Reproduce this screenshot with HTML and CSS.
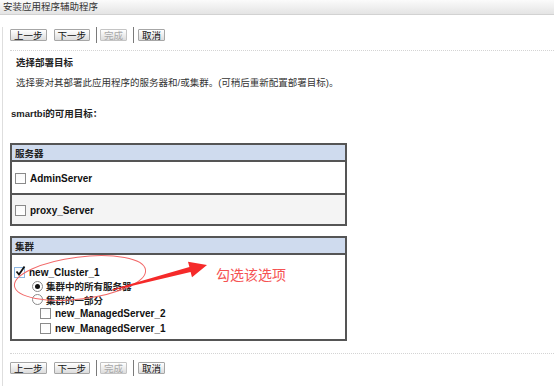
FILE: index.html
```html
<!DOCTYPE html>
<html lang="zh-CN">
<head>
    <meta charset="UTF-8">
    <title>安装应用程序辅助程序</title>
    <link rel="stylesheet" href="styles.css">
</head>
<body>
    <div class="titlebar">安装应用程序辅助程序</div>

    <div class="page">
        <div class="toolbar">
            <button class="btn">上一步</button>
            <button class="btn">下一步</button>
            <span class="sep"></span>
            <button class="btn" disabled>完成</button>
            <span class="sep"></span>
            <button class="btn btn-last">取消</button>
        </div>
        <div class="dots"></div>

        <div class="intro">
            <h3>选择部署目标</h3>
            <p>选择要对其部署此应用程序的服务器和/或集群。(可稍后重新配置部署目标)。</p>
        </div>

        <h4 class="targets">smartbi的可用目标：</h4>

        <div class="box">
            <div class="box-head">服务器</div>
            <div class="row">
                <span class="check"></span><span class="name">AdminServer</span>
            </div>
            <div class="row row-alt">
                <span class="check"></span><span class="name">proxy_Server</span>
            </div>
        </div>

        <div class="box cluster">
            <div class="box-head">集群</div>
            <div class="cluster-body">
                <div class="item">
                    <span class="check checked">
                        <svg width="13" height="13" viewBox="0 0 13 13"><path d="M2.5 6.5 L5 9.5 L10.5 1.5" fill="none" stroke="#111" stroke-width="1.8"/></svg>
                    </span><span class="name">new_Cluster_1</span>
                </div>
                <div class="item lvl1">
                    <span class="radio on"></span><span class="cn">集群中的所有服务器</span>
                </div>
                <div class="item lvl1 short">
                    <span class="radio"></span><span class="cn">集群的一部分</span>
                </div>
                <div class="item lvl2 tall">
                    <span class="check"></span><span class="name">new_ManagedServer_2</span>
                </div>
                <div class="item lvl2">
                    <span class="check"></span><span class="name">new_ManagedServer_1</span>
                </div>
            </div>
        </div>

        <div class="dots bottom"></div>
        <div class="toolbar">
            <button class="btn">上一步</button>
            <button class="btn">下一步</button>
            <span class="sep"></span>
            <button class="btn" disabled>完成</button>
            <span class="sep"></span>
            <button class="btn btn-last">取消</button>
        </div>
    </div>

    <!-- red hand-drawn note over the cluster box -->
    <svg class="mark" width="554" height="386" viewBox="0 0 554 386">
        <ellipse cx="80" cy="278" rx="66" ry="21" transform="rotate(-7 80 278)" fill="none" stroke="#f26a6a" stroke-width="1"/>
        <polygon points="112,289.5 189.4,267.1 188,261.8 207,265 192,277.2 190.6,271.9 112.3,290.5" fill="#f52a2a"/>
    </svg>
    <span class="note">勾选该选项</span>
</body>
</html>
```

FILE: styles.css
```css
* {
    box-sizing: border-box;
}
body {
    margin: 0;
    position: relative;
    width: 554px;
    height: 386px;
    overflow: hidden;
    background: #fff;
    color: #222;
    font-family: 'Liberation Sans', 'Noto Sans CJK SC', sans-serif;
    font-size: 9.5px;
}
.titlebar {
    height: 15px;
    line-height: 14px;
    padding-left: 3px;
    color: #333;
    background: linear-gradient(#fbfbfb, #e4e4e4);
    border-bottom: 1px solid #d2d2d2;
}
.page {
    margin-left: 2px;
    border-left: 1px solid #dedede;
    padding-left: 7px;
    height: 371px;
}
.toolbar {
    display: flex;
    align-items: center;
    height: 16px;
    margin-top: 12px;
}
.btn {
    font-family: 'Noto Sans CJK SC', sans-serif;
    font-size: 9.5px;
    height: 12px;
    line-height: 10px;
    padding: 0 3px;
    margin: 0 7px 0 0;
    border: 1px solid #a6a6a6;
    border-radius: 1px;
    background: linear-gradient(#ffffff, #dcdcdc);
    color: #111;
}
.btn[disabled] {
    color: #a8a8a8;
    border-color: #c4c4c4;
}
.sep {
    width: 1px;
    height: 16px;
    background: #7a7a7a;
    margin: 0 3px 0 -1px;
}
.btn-last {
    margin-left: 1px;
}
.dots {
    border-top: 1px dotted #d4d4d4;
    margin-top: 7px;
}
.dots.bottom {
    margin-top: 12px;
}
.bottom + .toolbar {
    margin-top: 6px;
}
.intro {
    padding-left: 6px;
}
.intro h3 {
    margin: 4px 0 0;
    font-size: 9.5px;
    line-height: 14px;
    font-family: 'Noto Sans CJK SC', sans-serif;
}
.intro p {
    margin: 7px 0 0;
    line-height: 14px;
    color: #333;
}
.targets {
    margin: 17px 0 0 1px;
    font-size: 9.5px;
    line-height: 14px;
}
.box {
    width: 337px;
    border: 2px solid #555;
    margin-top: 22px;
}
.box-head {
    height: 17px;
    line-height: 17px;
    padding-left: 3px;
    background: #cfdbee;
    border-bottom: 2px solid #555;
    font-weight: bold;
    font-family: 'Noto Sans CJK SC', sans-serif;
}
.row {
    display: flex;
    align-items: center;
    height: 31px;
    padding-left: 3px;
    padding-top: 2px;
}
.row-alt {
    border-top: 2px solid #555;
    height: 31px;
    background: #f4f4f4;
}
.name {
    font-weight: bold;
    font-size: 10px;
    color: #111;
    margin-left: 4px;
}
.cn {
    font-weight: bold;
    font-family: 'Noto Sans CJK SC', sans-serif;
    margin-left: 3px;
}
.check {
    position: relative;
    width: 11px;
    height: 11px;
    border: 1px solid #8a8a8a;
    background: linear-gradient(#fafafa, #fff);
}
.check.checked {
    border-color: #8db7e3;
}
.check svg {
    position: absolute;
    left: -1px;
    top: -3px;
}
.radio {
    width: 11px;
    height: 11px;
    border: 1px solid #8a8a8a;
    border-radius: 50%;
    background: #fff;
    display: flex;
    align-items: center;
    justify-content: center;
}
.radio.on::after {
    content: '';
    width: 5px;
    height: 5px;
    border-radius: 50%;
    background: #111;
}
.cluster {
    margin-top: 10px;
}
.cluster-body {
    padding: 10px 0 0 2px;
    height: 84px;
}
.item {
    display: flex;
    align-items: center;
    height: 14px;
}
.item.short {
    height: 13px;
}
.item.tall {
    height: 15px;
}
.lvl1 {
    padding-left: 18px;
}
.lvl2 {
    padding-left: 26px;
}
.mark {
    position: absolute;
    left: 0;
    top: 0;
    pointer-events: none;
}
.note {
    position: absolute;
    left: 216px;
    top: 266px;
    font-family: 'Noto Sans CJK SC', sans-serif;
    font-size: 14px;
    line-height: 16px;
    color: #f55353;
}
```
